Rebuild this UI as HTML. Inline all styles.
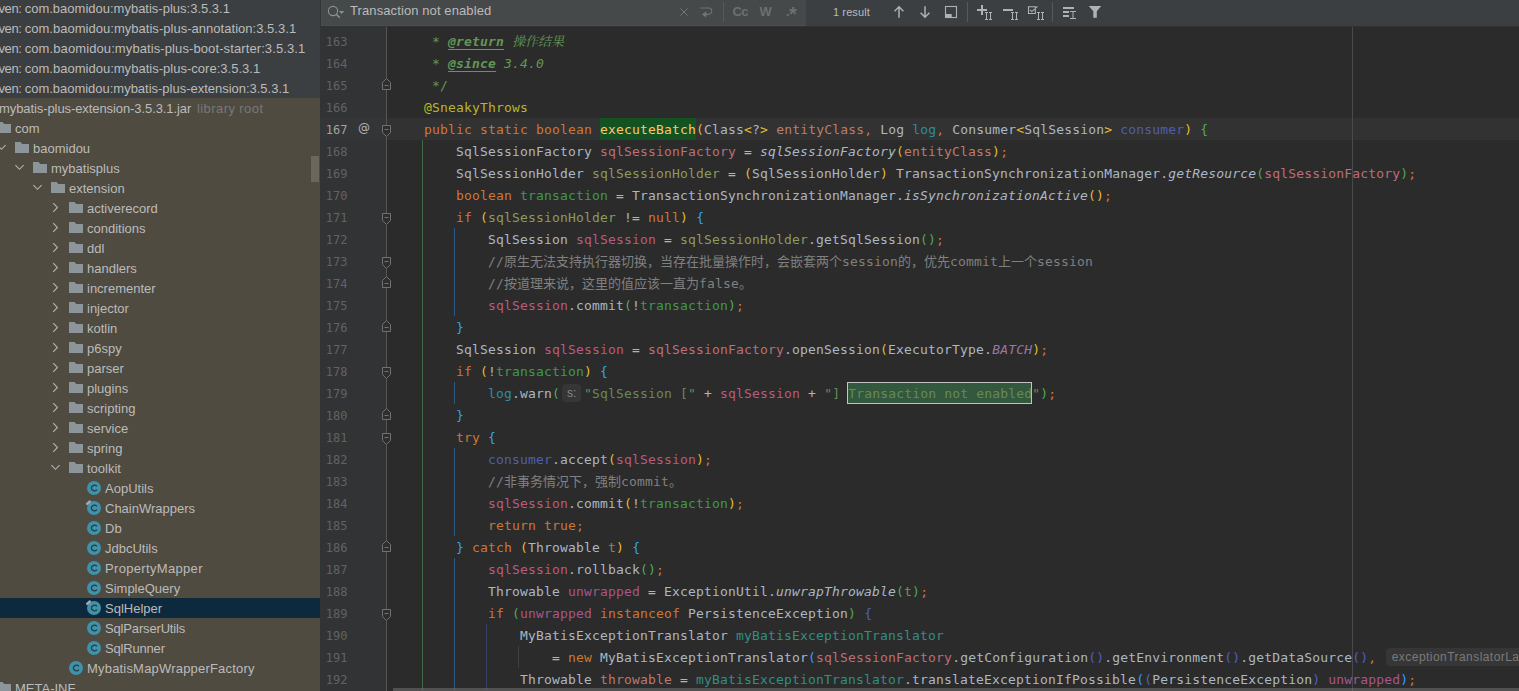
<!DOCTYPE html>
<html lang="zh"><head><meta charset="utf-8"><title>SqlHelper</title>
<style>
*{box-sizing:border-box}
html,body{margin:0;padding:0;background:#2B2B2B;overflow:hidden}
#app{position:relative;width:1519px;height:691px;overflow:hidden;background:#2B2B2B;font-family:"Liberation Sans","Noto Sans CJK SC",sans-serif}
#tree{position:absolute;left:0;top:0;width:320px;height:691px;background:#4F4B41;overflow:hidden;font-size:13px;color:#BBBBBB}
#tree .mvbg{position:absolute;left:0;top:0;width:320px;height:98px;background:#3C3F41}
.row{position:absolute;left:0;width:320px;height:20px;line-height:20px;white-space:nowrap}
.row.sel{background:#0D293E}
.row .t{position:absolute;top:1px;letter-spacing:0px}
.row .ic{position:absolute;top:2px;overflow:visible}
.gray{color:#787878}
#thumb{position:absolute;left:311px;top:156px;width:8px;height:26px;background:#6A675E}
#search{position:absolute;left:320px;top:0;width:1199px;height:26px;background:#3C3F41}
#sfield{position:absolute;left:1px;top:0;width:485px;height:26px;background:#45494A;border-left:1px solid #4A4E50;border-bottom:1px solid #4A4E50}
#sedge{position:absolute;left:0;top:0;width:1px;height:26px;background:#313335}
#sline{position:absolute;left:320px;top:26px;width:1199px;height:1px;background:#323232}
#gutter{position:absolute;left:320px;top:27px;width:66px;height:664px;background:#313335}
#foldline{position:absolute;left:386px;top:27px;width:1px;height:664px;background:#555555}
#margin{position:absolute;left:1352px;top:27px;width:1px;height:664px;background:#4A4A4A}
#curline{position:absolute;left:320px;top:118px;width:1199px;height:22px;background:#323232}
.num{position:absolute;left:320px;width:27.5px;text-align:right;height:22px;line-height:22px;color:#606366;font-family:"DejaVu Sans Mono","Liberation Mono",monospace;font-size:12px;letter-spacing:0px;padding-top:1px}
.num.cur{color:#A4A3A3}
.ln{position:absolute;left:360px;height:22px;line-height:22px;white-space:pre;color:#A9B7C6;font-family:"DejaVu Sans Mono","Liberation Mono","Noto Sans CJK SC",monospace;font-size:13px;letter-spacing:0.174px;padding-top:1px}
.i{font-style:italic}
.z{letter-spacing:0}
.hl,.found{}
#hlbox{position:absolute;left:600px;top:118px;width:96px;height:22px;background:#155221}
#foundbox{position:absolute;left:847px;top:382px;width:185px;height:22px;background:#32593D;border:1px solid #C3C3C3}
.dt{color:#629755;font-weight:bold;font-style:italic;text-decoration:underline;text-decoration-skip-ink:none;text-underline-offset:2.5px;text-decoration-thickness:1px}
.cjkserif{font-family:"DejaVu Sans Mono","Liberation Mono","Noto Serif CJK SC",serif}
.hint{display:inline-block;vertical-align:top;margin:1px 3px 0 2px;width:19px;text-align:center;height:18px;line-height:19px;padding:0;border-radius:4px;background:#363636;color:#888888;font-family:"Liberation Sans",sans-serif;font-size:12px;letter-spacing:0}
.hint2{width:auto;text-align:left;padding:0 6px 0 5.5px;letter-spacing:0.45px;line-height:19px;color:#7A7A7A}
.fold{position:absolute;left:382px}
.guide{position:absolute;width:1px}
#hscroll{position:absolute;left:393px;top:688px;width:1126px;height:3px;background:rgba(128,128,128,0.45)}
.sicon{position:absolute}
.stxt{position:absolute;line-height:22px;white-space:nowrap}
.stxt.b{font-weight:bold;color:#6C7073}
.d{color:#A9B7C6}
.k{color:#CC7832}
.m{color:#FFC66D}
.an{color:#BBB529}
.s{color:#6A8759}
.c{color:#808080}
.doc{color:#629755}
.sf{color:#9876AA}
.r1{color:#E8BA36}
.r2{color:#54A857}
.r3{color:#359FF4}
.r4{color:#5060BB}
.r5{color:#179387}
.vEntity{color:#BC7D6B}
.vLog{color:#2F8CA3}
.vConsumer{color:#4E5FAE}
.vFactory{color:#BB6E7C}
.vHolder{color:#8C9A5F}
.vTx{color:#3E9A49}
.vSession{color:#B85B80}
.vUnwrapped{color:#A8568C}
.vTranslator{color:#2F8F86}
.vThrowable{color:#BC786C}
.vT{color:#9E7B62}
</style></head><body>
<div id="app">
<div id="curline"></div>
<div id="margin"></div>
<div id="hlbox"></div><div id="foundbox"></div>
<div class="guide" style="left:422px;top:140px;height:550px;background:#3E6B42"></div>
<div class="guide" style="left:454px;top:228px;height:88px;background:#2D5985"></div>
<div class="guide" style="left:454px;top:382px;height:22px;background:#2D5985"></div>
<div class="guide" style="left:454px;top:448px;height:88px;background:#2D5985"></div>
<div class="guide" style="left:454px;top:558px;height:132px;background:#2D5985"></div>
<div class="guide" style="left:486px;top:624px;height:66px;background:#3A3F66"></div>
<div class="guide" style="left:518px;top:646px;height:22px;background:#3F3F3F"></div>
<div class="ln" style="top:30px">         <span class="doc">* </span><span class="dt">@return</span><span class="doc i cjkserif"> <span class="z">操作结果</span></span></div>
<div class="ln" style="top:52px">         <span class="doc">* </span><span class="dt">@since</span><span class="doc i"> 3.4.0</span></div>
<div class="ln" style="top:74px">         <span class="doc">*/</span></div>
<div class="ln" style="top:96px">        <span class="an">@SneakyThrows</span></div>
<div class="ln cur" style="top:118px">        <span class="k">public static boolean </span><span class="m hl">executeBatch</span><span class="r1">(</span><span class="d">Class</span><span class="r1">&lt;</span><span class="d">?</span><span class="r1">&gt;</span><span class="d"> </span><span class="vEntity">entityClass</span><span class="k">, </span><span class="d">Log </span><span class="vLog">log</span><span class="k">, </span><span class="d">Consumer</span><span class="r1">&lt;</span><span class="d">SqlSession</span><span class="r1">&gt;</span><span class="d"> </span><span class="vConsumer">consumer</span><span class="r1">)</span><span class="d"> </span><span class="r2">{</span></div>
<div class="ln" style="top:140px">            <span class="d">SqlSessionFactory </span><span class="vFactory">sqlSessionFactory</span><span class="d"> = </span><span class="d i">sqlSessionFactory</span><span class="r1">(</span><span class="vEntity">entityClass</span><span class="r1">)</span><span class="k">;</span></div>
<div class="ln" style="top:162px">            <span class="d">SqlSessionHolder </span><span class="vHolder">sqlSessionHolder</span><span class="d"> = </span><span class="r1">(</span><span class="d">SqlSessionHolder</span><span class="r1">)</span><span class="d"> TransactionSynchronizationManager.</span><span class="d i">getResource</span><span class="r2">(</span><span class="vFactory">sqlSessionFactory</span><span class="r2">)</span><span class="k">;</span></div>
<div class="ln" style="top:184px">            <span class="k">boolean </span><span class="vTx">transaction</span><span class="d"> = TransactionSynchronizationManager.</span><span class="d i">isSynchronizationActive</span><span class="r1">()</span><span class="k">;</span></div>
<div class="ln" style="top:206px">            <span class="k">if </span><span class="r1">(</span><span class="vHolder">sqlSessionHolder</span><span class="d"> != </span><span class="k">null</span><span class="r1">)</span><span class="d"> </span><span class="r3">{</span></div>
<div class="ln" style="top:228px">                <span class="d">SqlSession </span><span class="vSession">sqlSession</span><span class="d"> = </span><span class="vHolder">sqlSessionHolder</span><span class="d">.getSqlSession</span><span class="r2">()</span><span class="k">;</span></div>
<div class="ln" style="top:250px">                <span class="c">//<span class="z">原生无法支持执行器切换，当存在批量操作时，会嵌套两个</span>session<span class="z">的，优先</span>commit<span class="z">上一个</span>session</span></div>
<div class="ln" style="top:272px">                <span class="c">//<span class="z">按道理来说，这里的值应该一直为</span>false<span class="z">。</span></span></div>
<div class="ln" style="top:294px">                <span class="vSession">sqlSession</span><span class="d">.commit</span><span class="r2">(</span><span class="d">!</span><span class="vTx">transaction</span><span class="r2">)</span><span class="k">;</span></div>
<div class="ln" style="top:316px">            <span class="r3">}</span></div>
<div class="ln" style="top:338px">            <span class="d">SqlSession </span><span class="vSession">sqlSession</span><span class="d"> = </span><span class="vFactory">sqlSessionFactory</span><span class="d">.openSession</span><span class="r1">(</span><span class="d">ExecutorType.</span><span class="sf i">BATCH</span><span class="r1">)</span><span class="k">;</span></div>
<div class="ln" style="top:360px">            <span class="k">if </span><span class="r1">(</span><span class="d">!</span><span class="vTx">transaction</span><span class="r1">)</span><span class="d"> </span><span class="r3">{</span></div>
<div class="ln" style="top:382px">                <span class="vLog">log</span><span class="d">.warn</span><span class="r2">(</span><span class="hint">s:</span><span class="s">"SqlSession ["</span><span class="d"> + </span><span class="vSession">sqlSession</span><span class="d"> + </span><span class="s">"] </span><span class="s found">Transaction not enabled</span><span class="s">"</span><span class="r2">)</span><span class="k">;</span></div>
<div class="ln" style="top:404px">            <span class="r3">}</span></div>
<div class="ln" style="top:426px">            <span class="k">try </span><span class="r3">{</span></div>
<div class="ln" style="top:448px">                <span class="vConsumer">consumer</span><span class="d">.accept</span><span class="r1">(</span><span class="vSession">sqlSession</span><span class="r1">)</span><span class="k">;</span></div>
<div class="ln" style="top:470px">                <span class="c">//<span class="z">非事务情况下，强制</span>commit<span class="z">。</span></span></div>
<div class="ln" style="top:492px">                <span class="vSession">sqlSession</span><span class="d">.commit</span><span class="r1">(</span><span class="d">!</span><span class="vTx">transaction</span><span class="r1">)</span><span class="k">;</span></div>
<div class="ln" style="top:514px">                <span class="k">return true;</span></div>
<div class="ln" style="top:536px">            <span class="r3">}</span><span class="k"> catch </span><span class="r1">(</span><span class="d">Throwable </span><span class="vT">t</span><span class="r1">)</span><span class="d"> </span><span class="r3">{</span></div>
<div class="ln" style="top:558px">                <span class="vSession">sqlSession</span><span class="d">.rollback</span><span class="r2">()</span><span class="k">;</span></div>
<div class="ln" style="top:580px">                <span class="d">Throwable </span><span class="vUnwrapped">unwrapped</span><span class="d"> = ExceptionUtil.</span><span class="d i">unwrapThrowable</span><span class="r2">(</span><span class="vT">t</span><span class="r2">)</span><span class="k">;</span></div>
<div class="ln" style="top:602px">                <span class="k">if </span><span class="r2">(</span><span class="vUnwrapped">unwrapped</span><span class="k"> instanceof </span><span class="d">PersistenceException</span><span class="r2">)</span><span class="d"> </span><span class="r4">{</span></div>
<div class="ln" style="top:624px">                    <span class="d">MyBatisExceptionTranslator </span><span class="vTranslator">myBatisExceptionTranslator</span></div>
<div class="ln" style="top:646px">                        <span class="d">= </span><span class="k">new </span><span class="d">MyBatisExceptionTranslator</span><span class="r3">(</span><span class="vFactory">sqlSessionFactory</span><span class="d">.getConfiguration</span><span class="r4">()</span><span class="d">.getEnvironment</span><span class="r4">()</span><span class="d">.getDataSource</span><span class="r4">()</span><span class="k">, </span><span class="hint hint2">exceptionTranslatorLazyInit:</span></div>
<div class="ln" style="top:668px">                    <span class="d">Throwable </span><span class="vThrowable">throwable</span><span class="d"> = </span><span class="vTranslator">myBatisExceptionTranslator</span><span class="d">.translateExceptionIfPossible</span><span class="r3">(</span><span class="r4">(</span><span class="d">PersistenceException</span><span class="r4">)</span><span class="d"> </span><span class="vUnwrapped">unwrapped</span><span class="r3">)</span><span class="k">;</span></div>
<div id="hscroll"></div>
<div id="gutter"></div>
<div id="gcur" style="position:absolute;left:320px;top:118px;width:66px;height:22px;background:#333537"></div>
<div id="foldline"></div>
<div class="num" style="top:30px">163</div>
<div class="num" style="top:52px">164</div>
<div class="num" style="top:74px">165</div>
<div class="num" style="top:96px">166</div>
<div class="num cur" style="top:118px">167</div>
<div class="num" style="top:140px">168</div>
<div class="num" style="top:162px">169</div>
<div class="num" style="top:184px">170</div>
<div class="num" style="top:206px">171</div>
<div class="num" style="top:228px">172</div>
<div class="num" style="top:250px">173</div>
<div class="num" style="top:272px">174</div>
<div class="num" style="top:294px">175</div>
<div class="num" style="top:316px">176</div>
<div class="num" style="top:338px">177</div>
<div class="num" style="top:360px">178</div>
<div class="num" style="top:382px">179</div>
<div class="num" style="top:404px">180</div>
<div class="num" style="top:426px">181</div>
<div class="num" style="top:448px">182</div>
<div class="num" style="top:470px">183</div>
<div class="num" style="top:492px">184</div>
<div class="num" style="top:514px">185</div>
<div class="num" style="top:536px">186</div>
<div class="num" style="top:558px">187</div>
<div class="num" style="top:580px">188</div>
<div class="num" style="top:602px">189</div>
<div class="num" style="top:624px">190</div>
<div class="num" style="top:646px">191</div>
<div class="num" style="top:668px">192</div>
<svg class="fold" style="top:78px" width="9" height="12" viewBox="0 0 9 12"><path d="M0.5 4.5 L4.5 0.5 L8.5 4.5 L8.5 11.5 L0.5 11.5 Z" fill="#2D2E2F" stroke="#6F7275" stroke-width="1"/><path d="M2.5 7.5 H6.5" stroke="#6F7275" stroke-width="1"/></svg>
<svg class="fold" style="top:125px" width="9" height="12" viewBox="0 0 9 12"><path d="M0.5 0.5 L8.5 0.5 L8.5 7.5 L4.5 11.5 L0.5 7.5 Z" fill="#2D2E2F" stroke="#6F7275" stroke-width="1"/><path d="M2.5 4.5 H6.5" stroke="#6F7275" stroke-width="1"/></svg>
<svg class="fold" style="top:213px" width="9" height="12" viewBox="0 0 9 12"><path d="M0.5 0.5 L8.5 0.5 L8.5 7.5 L4.5 11.5 L0.5 7.5 Z" fill="#2D2E2F" stroke="#6F7275" stroke-width="1"/><path d="M2.5 4.5 H6.5" stroke="#6F7275" stroke-width="1"/></svg>
<svg class="fold" style="top:257px" width="9" height="12" viewBox="0 0 9 12"><path d="M0.5 0.5 L8.5 0.5 L8.5 7.5 L4.5 11.5 L0.5 7.5 Z" fill="#2D2E2F" stroke="#6F7275" stroke-width="1"/><path d="M2.5 4.5 H6.5" stroke="#6F7275" stroke-width="1"/></svg>
<svg class="fold" style="top:276px" width="9" height="12" viewBox="0 0 9 12"><path d="M0.5 4.5 L4.5 0.5 L8.5 4.5 L8.5 11.5 L0.5 11.5 Z" fill="#2D2E2F" stroke="#6F7275" stroke-width="1"/><path d="M2.5 7.5 H6.5" stroke="#6F7275" stroke-width="1"/></svg>
<svg class="fold" style="top:320px" width="9" height="12" viewBox="0 0 9 12"><path d="M0.5 4.5 L4.5 0.5 L8.5 4.5 L8.5 11.5 L0.5 11.5 Z" fill="#2D2E2F" stroke="#6F7275" stroke-width="1"/><path d="M2.5 7.5 H6.5" stroke="#6F7275" stroke-width="1"/></svg>
<svg class="fold" style="top:367px" width="9" height="12" viewBox="0 0 9 12"><path d="M0.5 0.5 L8.5 0.5 L8.5 7.5 L4.5 11.5 L0.5 7.5 Z" fill="#2D2E2F" stroke="#6F7275" stroke-width="1"/><path d="M2.5 4.5 H6.5" stroke="#6F7275" stroke-width="1"/></svg>
<svg class="fold" style="top:408px" width="9" height="12" viewBox="0 0 9 12"><path d="M0.5 4.5 L4.5 0.5 L8.5 4.5 L8.5 11.5 L0.5 11.5 Z" fill="#2D2E2F" stroke="#6F7275" stroke-width="1"/><path d="M2.5 7.5 H6.5" stroke="#6F7275" stroke-width="1"/></svg>
<svg class="fold" style="top:433px" width="9" height="12" viewBox="0 0 9 12"><path d="M0.5 0.5 L8.5 0.5 L8.5 7.5 L4.5 11.5 L0.5 7.5 Z" fill="#2D2E2F" stroke="#6F7275" stroke-width="1"/><path d="M2.5 4.5 H6.5" stroke="#6F7275" stroke-width="1"/></svg>
<svg class="fold" style="top:540px" width="9" height="12" viewBox="0 0 9 12"><path d="M0.5 4.5 L4.5 0.5 L8.5 4.5 L8.5 11.5 L0.5 11.5 Z" fill="#2D2E2F" stroke="#6F7275" stroke-width="1"/><path d="M2.5 7.5 H6.5" stroke="#6F7275" stroke-width="1"/></svg>
<svg class="fold" style="top:609px" width="9" height="12" viewBox="0 0 9 12"><path d="M0.5 0.5 L8.5 0.5 L8.5 7.5 L4.5 11.5 L0.5 7.5 Z" fill="#2D2E2F" stroke="#6F7275" stroke-width="1"/><path d="M2.5 4.5 H6.5" stroke="#6F7275" stroke-width="1"/></svg>
<span style="position:absolute;left:358px;top:118px;line-height:21px;font-size:12px;color:#B4B6B8;font-family:'DejaVu Sans','Liberation Sans',sans-serif">@</span>
<div id="sline"></div>

<div id="search"><div id="sfield"></div><div id="sedge"></div>
<svg class="sicon" style="left:0;top:0" width="1199" height="26" viewBox="320 0 1199 26">
<g fill="none" stroke="#8A9297" stroke-width="1.1"><circle cx="333" cy="11" r="4.6"/><path d="M336.4 14.4 L339.8 17.8" stroke-width="1.5"/></g>
<path d="M339 11 H344.2 L341.6 14 Z" fill="#8A9297"/>
<path d="M680.3 8.3 L687.7 15.7 M687.7 8.3 L680.3 15.7" stroke="#6F7579" stroke-width="1"/>
<path d="M700.5 8 H708.5 A3.2 3.2 0 0 1 708.5 14.4 H705.5" fill="none" stroke="#6F7579" stroke-width="1.1"/>
<path d="M701.8 14.4 L706.3 11.2 V17.6 Z" fill="#6F7579"/>
<path d="M723.5 2 V22 M967.5 2 V22 M1052.5 2 V22" stroke="#565A5C" stroke-width="1"/>
<g fill="none" stroke="#AFB1B3" stroke-width="1.5"><path d="M899 17.7 V6.8 M894.6 11.2 L899 6.8 L903.4 11.2"/><path d="M925 6.2 V17.2 M920.6 12.8 L925 17.2 L929.4 12.8"/></g>
<rect x="945.5" y="6.5" width="11" height="11" fill="none" stroke="#AFB1B3" stroke-width="1.1"/><rect x="945" y="14" width="6.7" height="4" fill="#AFB1B3"/>
<path d="M977 10 H987 M982 5 V15" stroke="#AFB1B3" stroke-width="2"/><path d="M985 12.5 h3 m1 0 h3 M985 19.5 h3 m1 0 h3 M986.5 12.5 v7 M990.5 12.5 v7" stroke="#AFB1B3" stroke-width="1" fill="none"/>
<path d="M1003 10 H1013" stroke="#AFB1B3" stroke-width="2"/><path d="M1011 12.5 h3 m1 0 h3 M1011 19.5 h3 m1 0 h3 M1012.5 12.5 v7 M1016.5 12.5 v7" stroke="#AFB1B3" stroke-width="1" fill="none"/>
<path d="M1028.5 6.8 H1035.3 V13.5 H1028.5 Z M1030 9.8 L1031.8 11.6 L1037.5 6.4" fill="none" stroke="#AFB1B3" stroke-width="1.1"/><path d="M1037 12.5 h3 m1 0 h3 M1037 19.5 h3 m1 0 h3 M1038.5 12.5 v7 M1042.5 12.5 v7" stroke="#AFB1B3" stroke-width="1" fill="none"/>
<path d="M1063 8 H1074 M1063 12 H1069 M1063 16 H1069" stroke="#AFB1B3" stroke-width="2"/>
<path d="M1070 11.5 h6 M1070 18.5 h6 M1073 11.5 v7" stroke="#AFB1B3" stroke-width="1" fill="none"/>
<path d="M1088.7 6 H1101.2 L1096.8 11.2 V17.7 H1093.3 V11.2 Z" fill="#AFB1B3"/>
</svg>
<span class="stxt" style="left:30px;top:0;font-size:13px;color:#BBBBBB;letter-spacing:0.1px">Transaction not enabled</span>
<span class="stxt b" style="left:412.5px;top:1px;font-size:13px;letter-spacing:-0.6px">Cc</span>
<span class="stxt b" style="left:439.5px;top:1px;font-size:13px">W</span>
<span class="stxt b" style="left:466px;top:1px;font-size:13px">.</span><span class="stxt b" style="left:469px;top:3px;font-size:20px;">*</span>
<span class="stxt" style="left:513px;top:1px;font-size:11px;color:#BBBBBB;letter-spacing:0.1px">1 result</span>
</div>

<div id="tree"><div class="mvbg"></div>
<div class="row mv" style="top:-2px"><span class="t" style="left:-1.5px;letter-spacing:-0.4px">ven: </span><span class="t" style="left:24.7px;letter-spacing:0px">com.baomidou:mybatis-plus:3.5.3.1</span></div>
<div class="row mv" style="top:18px"><span class="t" style="left:-1.5px;letter-spacing:-0.4px">ven: </span><span class="t" style="left:24.7px;letter-spacing:0.027px">com.baomidou:mybatis-plus-annotation:3.5.3.1</span></div>
<div class="row mv" style="top:38px"><span class="t" style="left:-1.5px;letter-spacing:-0.4px">ven: </span><span class="t" style="left:24.7px;letter-spacing:0.1px">com.baomidou:mybatis-plus-boot-starter:3.5.3.1</span></div>
<div class="row mv" style="top:58px"><span class="t" style="left:-1.5px;letter-spacing:-0.4px">ven: </span><span class="t" style="left:24.7px;letter-spacing:0.016px">com.baomidou:mybatis-plus-core:3.5.3.1</span></div>
<div class="row mv" style="top:78px"><span class="t" style="left:-1.5px;letter-spacing:-0.4px">ven: </span><span class="t" style="left:24.7px;letter-spacing:-0.016px">com.baomidou:mybatis-plus-extension:3.5.3.1</span></div>
<div class="row " style="top:98px"><span class="t" style="left:-1px;letter-spacing:-0.085px">mybatis-plus-extension-3.5.3.1.jar</span><span class="t gray" style="left:197px;letter-spacing:0.42px">library root</span></div>
<div class="row " style="top:118px"><svg class="ic" style="left:-5px" width="16" height="16" viewBox="0 0 16 16"><path d="M2 2 H7.6 L9.2 4 H16 V13 H2 Z" fill="#9AA7B0" fill-opacity="0.8"/></svg><span class="t" style="left:15px">com</span></div>
<div class="row " style="top:138px"><svg class="ic" style="left:-7px" width="16" height="16" viewBox="0 0 16 16"><path d="M4.4 5.2 L8.5 9.3 L12.6 5.2" fill="none" stroke="#AFB1B3" stroke-width="1.15"/></svg><svg class="ic" style="left:13px" width="16" height="16" viewBox="0 0 16 16"><path d="M2 2 H7.6 L9.2 4 H16 V13 H2 Z" fill="#9AA7B0" fill-opacity="0.8"/></svg><span class="t" style="left:33px">baomidou</span></div>
<div class="row " style="top:158px"><svg class="ic" style="left:11px" width="16" height="16" viewBox="0 0 16 16"><path d="M4.4 5.2 L8.5 9.3 L12.6 5.2" fill="none" stroke="#AFB1B3" stroke-width="1.15"/></svg><svg class="ic" style="left:31px" width="16" height="16" viewBox="0 0 16 16"><path d="M2 2 H7.6 L9.2 4 H16 V13 H2 Z" fill="#9AA7B0" fill-opacity="0.8"/></svg><span class="t" style="left:51px">mybatisplus</span></div>
<div class="row " style="top:178px"><svg class="ic" style="left:29px" width="16" height="16" viewBox="0 0 16 16"><path d="M4.4 5.2 L8.5 9.3 L12.6 5.2" fill="none" stroke="#AFB1B3" stroke-width="1.15"/></svg><svg class="ic" style="left:49px" width="16" height="16" viewBox="0 0 16 16"><path d="M2 2 H7.6 L9.2 4 H16 V13 H2 Z" fill="#9AA7B0" fill-opacity="0.8"/></svg><span class="t" style="left:69px">extension</span></div>
<div class="row " style="top:198px"><svg class="ic" style="left:47px" width="16" height="16" viewBox="0 0 16 16"><path d="M6.2 3.2 L10.4 7.5 L6.2 11.8" fill="none" stroke="#AFB1B3" stroke-width="1.15"/></svg><svg class="ic" style="left:67px" width="16" height="16" viewBox="0 0 16 16"><path d="M2 2 H7.6 L9.2 4 H16 V13 H2 Z" fill="#9AA7B0" fill-opacity="0.8"/></svg><span class="t" style="left:87px">activerecord</span></div>
<div class="row " style="top:218px"><svg class="ic" style="left:47px" width="16" height="16" viewBox="0 0 16 16"><path d="M6.2 3.2 L10.4 7.5 L6.2 11.8" fill="none" stroke="#AFB1B3" stroke-width="1.15"/></svg><svg class="ic" style="left:67px" width="16" height="16" viewBox="0 0 16 16"><path d="M2 2 H7.6 L9.2 4 H16 V13 H2 Z" fill="#9AA7B0" fill-opacity="0.8"/></svg><span class="t" style="left:87px">conditions</span></div>
<div class="row " style="top:238px"><svg class="ic" style="left:47px" width="16" height="16" viewBox="0 0 16 16"><path d="M6.2 3.2 L10.4 7.5 L6.2 11.8" fill="none" stroke="#AFB1B3" stroke-width="1.15"/></svg><svg class="ic" style="left:67px" width="16" height="16" viewBox="0 0 16 16"><path d="M2 2 H7.6 L9.2 4 H16 V13 H2 Z" fill="#9AA7B0" fill-opacity="0.8"/></svg><span class="t" style="left:87px">ddl</span></div>
<div class="row " style="top:258px"><svg class="ic" style="left:47px" width="16" height="16" viewBox="0 0 16 16"><path d="M6.2 3.2 L10.4 7.5 L6.2 11.8" fill="none" stroke="#AFB1B3" stroke-width="1.15"/></svg><svg class="ic" style="left:67px" width="16" height="16" viewBox="0 0 16 16"><path d="M2 2 H7.6 L9.2 4 H16 V13 H2 Z" fill="#9AA7B0" fill-opacity="0.8"/></svg><span class="t" style="left:87px">handlers</span></div>
<div class="row " style="top:278px"><svg class="ic" style="left:47px" width="16" height="16" viewBox="0 0 16 16"><path d="M6.2 3.2 L10.4 7.5 L6.2 11.8" fill="none" stroke="#AFB1B3" stroke-width="1.15"/></svg><svg class="ic" style="left:67px" width="16" height="16" viewBox="0 0 16 16"><path d="M2 2 H7.6 L9.2 4 H16 V13 H2 Z" fill="#9AA7B0" fill-opacity="0.8"/></svg><span class="t" style="left:87px">incrementer</span></div>
<div class="row " style="top:298px"><svg class="ic" style="left:47px" width="16" height="16" viewBox="0 0 16 16"><path d="M6.2 3.2 L10.4 7.5 L6.2 11.8" fill="none" stroke="#AFB1B3" stroke-width="1.15"/></svg><svg class="ic" style="left:67px" width="16" height="16" viewBox="0 0 16 16"><path d="M2 2 H7.6 L9.2 4 H16 V13 H2 Z" fill="#9AA7B0" fill-opacity="0.8"/></svg><span class="t" style="left:87px">injector</span></div>
<div class="row " style="top:318px"><svg class="ic" style="left:47px" width="16" height="16" viewBox="0 0 16 16"><path d="M6.2 3.2 L10.4 7.5 L6.2 11.8" fill="none" stroke="#AFB1B3" stroke-width="1.15"/></svg><svg class="ic" style="left:67px" width="16" height="16" viewBox="0 0 16 16"><path d="M2 2 H7.6 L9.2 4 H16 V13 H2 Z" fill="#9AA7B0" fill-opacity="0.8"/></svg><span class="t" style="left:87px">kotlin</span></div>
<div class="row " style="top:338px"><svg class="ic" style="left:47px" width="16" height="16" viewBox="0 0 16 16"><path d="M6.2 3.2 L10.4 7.5 L6.2 11.8" fill="none" stroke="#AFB1B3" stroke-width="1.15"/></svg><svg class="ic" style="left:67px" width="16" height="16" viewBox="0 0 16 16"><path d="M2 2 H7.6 L9.2 4 H16 V13 H2 Z" fill="#9AA7B0" fill-opacity="0.8"/></svg><span class="t" style="left:87px">p6spy</span></div>
<div class="row " style="top:358px"><svg class="ic" style="left:47px" width="16" height="16" viewBox="0 0 16 16"><path d="M6.2 3.2 L10.4 7.5 L6.2 11.8" fill="none" stroke="#AFB1B3" stroke-width="1.15"/></svg><svg class="ic" style="left:67px" width="16" height="16" viewBox="0 0 16 16"><path d="M2 2 H7.6 L9.2 4 H16 V13 H2 Z" fill="#9AA7B0" fill-opacity="0.8"/></svg><span class="t" style="left:87px">parser</span></div>
<div class="row " style="top:378px"><svg class="ic" style="left:47px" width="16" height="16" viewBox="0 0 16 16"><path d="M6.2 3.2 L10.4 7.5 L6.2 11.8" fill="none" stroke="#AFB1B3" stroke-width="1.15"/></svg><svg class="ic" style="left:67px" width="16" height="16" viewBox="0 0 16 16"><path d="M2 2 H7.6 L9.2 4 H16 V13 H2 Z" fill="#9AA7B0" fill-opacity="0.8"/></svg><span class="t" style="left:87px">plugins</span></div>
<div class="row " style="top:398px"><svg class="ic" style="left:47px" width="16" height="16" viewBox="0 0 16 16"><path d="M6.2 3.2 L10.4 7.5 L6.2 11.8" fill="none" stroke="#AFB1B3" stroke-width="1.15"/></svg><svg class="ic" style="left:67px" width="16" height="16" viewBox="0 0 16 16"><path d="M2 2 H7.6 L9.2 4 H16 V13 H2 Z" fill="#9AA7B0" fill-opacity="0.8"/></svg><span class="t" style="left:87px">scripting</span></div>
<div class="row " style="top:418px"><svg class="ic" style="left:47px" width="16" height="16" viewBox="0 0 16 16"><path d="M6.2 3.2 L10.4 7.5 L6.2 11.8" fill="none" stroke="#AFB1B3" stroke-width="1.15"/></svg><svg class="ic" style="left:67px" width="16" height="16" viewBox="0 0 16 16"><path d="M2 2 H7.6 L9.2 4 H16 V13 H2 Z" fill="#9AA7B0" fill-opacity="0.8"/></svg><span class="t" style="left:87px">service</span></div>
<div class="row " style="top:438px"><svg class="ic" style="left:47px" width="16" height="16" viewBox="0 0 16 16"><path d="M6.2 3.2 L10.4 7.5 L6.2 11.8" fill="none" stroke="#AFB1B3" stroke-width="1.15"/></svg><svg class="ic" style="left:67px" width="16" height="16" viewBox="0 0 16 16"><path d="M2 2 H7.6 L9.2 4 H16 V13 H2 Z" fill="#9AA7B0" fill-opacity="0.8"/></svg><span class="t" style="left:87px">spring</span></div>
<div class="row " style="top:458px"><svg class="ic" style="left:47px" width="16" height="16" viewBox="0 0 16 16"><path d="M4.4 5.2 L8.5 9.3 L12.6 5.2" fill="none" stroke="#AFB1B3" stroke-width="1.15"/></svg><svg class="ic" style="left:67px" width="16" height="16" viewBox="0 0 16 16"><path d="M2 2 H7.6 L9.2 4 H16 V13 H2 Z" fill="#9AA7B0" fill-opacity="0.8"/></svg><span class="t" style="left:87px">toolkit</span></div>
<div class="row " style="top:478px"><svg class="ic" style="left:86px" width="16" height="16" viewBox="0 0 16 16"><circle cx="8" cy="8" r="7" fill="#3E92A9"/><path d="M10.9 9.8 A3.15 2.75 0 1 1 10.9 6.2" fill="none" stroke="#263B45" stroke-width="1.25"/></svg><span class="t" style="left:105px">AopUtils</span></div>
<div class="row " style="top:498px"><svg class="ic" style="left:86px" width="16" height="16" viewBox="0 0 16 16"><circle cx="8" cy="8" r="7" fill="#3E92A9"/><path d="M10.9 9.8 A3.15 2.75 0 1 1 10.9 6.2" fill="none" stroke="#263B45" stroke-width="1.25"/><path d="M1.1 3.8 L3.8 1.5" stroke="#A2ABB1" stroke-width="2.4" stroke-linecap="round"/><path d="M3 3.2 L4.8 4.8" stroke="#9AA7B0" stroke-width="0.7"/></svg><span class="t" style="left:105px">ChainWrappers</span></div>
<div class="row " style="top:518px"><svg class="ic" style="left:86px" width="16" height="16" viewBox="0 0 16 16"><circle cx="8" cy="8" r="7" fill="#3E92A9"/><path d="M10.9 9.8 A3.15 2.75 0 1 1 10.9 6.2" fill="none" stroke="#263B45" stroke-width="1.25"/></svg><span class="t" style="left:105px">Db</span></div>
<div class="row " style="top:538px"><svg class="ic" style="left:86px" width="16" height="16" viewBox="0 0 16 16"><circle cx="8" cy="8" r="7" fill="#3E92A9"/><path d="M10.9 9.8 A3.15 2.75 0 1 1 10.9 6.2" fill="none" stroke="#263B45" stroke-width="1.25"/></svg><span class="t" style="left:105px">JdbcUtils</span></div>
<div class="row " style="top:558px"><svg class="ic" style="left:86px" width="16" height="16" viewBox="0 0 16 16"><circle cx="8" cy="8" r="7" fill="#3E92A9"/><path d="M10.9 9.8 A3.15 2.75 0 1 1 10.9 6.2" fill="none" stroke="#263B45" stroke-width="1.25"/></svg><span class="t" style="left:105px;letter-spacing:0.33px">PropertyMapper</span></div>
<div class="row " style="top:578px"><svg class="ic" style="left:86px" width="16" height="16" viewBox="0 0 16 16"><circle cx="8" cy="8" r="7" fill="#3E92A9"/><path d="M10.9 9.8 A3.15 2.75 0 1 1 10.9 6.2" fill="none" stroke="#263B45" stroke-width="1.25"/></svg><span class="t" style="left:105px">SimpleQuery</span></div>
<div class="row sel" style="top:598px"><svg class="ic" style="left:86px" width="16" height="16" viewBox="0 0 16 16"><circle cx="8" cy="8" r="7" fill="#3E92A9"/><path d="M10.9 9.8 A3.15 2.75 0 1 1 10.9 6.2" fill="none" stroke="#263B45" stroke-width="1.25"/><path d="M1.1 3.8 L3.8 1.5" stroke="#A2ABB1" stroke-width="2.4" stroke-linecap="round"/><path d="M3 3.2 L4.8 4.8" stroke="#9AA7B0" stroke-width="0.7"/></svg><span class="t" style="left:105px">SqlHelper</span></div>
<div class="row " style="top:618px"><svg class="ic" style="left:86px" width="16" height="16" viewBox="0 0 16 16"><circle cx="8" cy="8" r="7" fill="#3E92A9"/><path d="M10.9 9.8 A3.15 2.75 0 1 1 10.9 6.2" fill="none" stroke="#263B45" stroke-width="1.25"/></svg><span class="t" style="left:105px;letter-spacing:-0.16px">SqlParserUtils</span></div>
<div class="row " style="top:638px"><svg class="ic" style="left:86px" width="16" height="16" viewBox="0 0 16 16"><circle cx="8" cy="8" r="7" fill="#3E92A9"/><path d="M10.9 9.8 A3.15 2.75 0 1 1 10.9 6.2" fill="none" stroke="#263B45" stroke-width="1.25"/></svg><span class="t" style="left:105px;letter-spacing:-0.18px">SqlRunner</span></div>
<div class="row " style="top:658px"><svg class="ic" style="left:68px" width="16" height="16" viewBox="0 0 16 16"><circle cx="8" cy="8" r="7" fill="#3E92A9"/><path d="M10.9 9.8 A3.15 2.75 0 1 1 10.9 6.2" fill="none" stroke="#263B45" stroke-width="1.25"/></svg><span class="t" style="left:87px;letter-spacing:0.19px">MybatisMapWrapperFactory</span></div>
<div class="row " style="top:678px"><svg class="ic" style="left:-5px" width="16" height="16" viewBox="0 0 16 16"><path d="M2 2 H7.6 L9.2 4 H16 V13 H2 Z" fill="#9AA7B0" fill-opacity="0.8"/></svg><span class="t" style="left:15px">META-INF</span></div>
<div id="thumb"></div>
</div>
</div>
</body></html>
